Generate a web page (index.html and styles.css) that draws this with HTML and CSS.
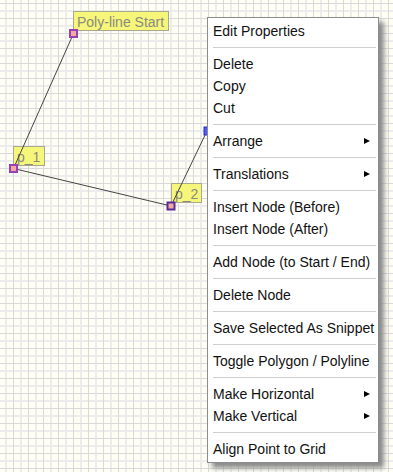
FILE: index.html
```html
<!DOCTYPE html>
<html lang="en">
<head>
    <meta charset="UTF-8">
    <meta name="viewport" content="width=device-width, initial-scale=1.0">
    <title>Poly-line Editor</title>
    <link rel="stylesheet" href="styles.css">
</head>
<body>
    <div class="canvas">
        <svg class="drawing" width="393" height="472" viewBox="0 0 393 472">
            <!-- labels -->
            <g class="label">
                <rect x="73.5" y="11.5" width="95" height="19"></rect>
                <text x="77" y="27">Poly-line Start</text>
            </g>
            <g class="label">
                <rect x="13.5" y="146.5" width="31" height="19"></rect>
                <text x="17" y="162">p_1</text>
            </g>
            <g class="label">
                <rect x="171.5" y="183.5" width="30" height="19"></rect>
                <text x="175" y="199">p_2</text>
            </g>

            <!-- segments -->
            <polyline class="segment" points="73.5,33.5 13.5,168.5 171,206 207,131"></polyline>

            <!-- nodes -->
            <rect class="node" x="70" y="30" width="7" height="7"></rect>
            <rect class="node" x="10" y="165" width="7" height="7"></rect>
            <rect class="node node-dark" x="167.5" y="202.5" width="7" height="7"></rect>
            <rect class="node node-blue" x="204" y="127" width="7" height="8"></rect>
        </svg>

        <ul class="context-menu">
            <li class="item">Edit Properties</li>
            <li class="sep"></li>
            <li class="item">Delete</li>
            <li class="item">Copy</li>
            <li class="item">Cut</li>
            <li class="sep"></li>
            <li class="item has-sub">Arrange</li>
            <li class="sep"></li>
            <li class="item has-sub">Translations</li>
            <li class="sep"></li>
            <li class="item">Insert Node (Before)</li>
            <li class="item">Insert Node (After)</li>
            <li class="sep"></li>
            <li class="item">Add Node (to Start / End)</li>
            <li class="sep"></li>
            <li class="item">Delete Node</li>
            <li class="sep"></li>
            <li class="item">Save Selected As Snippet</li>
            <li class="sep"></li>
            <li class="item">Toggle Polygon / Polyline</li>
            <li class="sep"></li>
            <li class="item has-sub">Make Horizontal</li>
            <li class="item has-sub">Make Vertical</li>
            <li class="sep"></li>
            <li class="item">Align Point to Grid</li>
        </ul>
    </div>
</body>
</html>
```

FILE: styles.css
```css
body {
    margin: 0;
    font-family: "Liberation Sans", Arial, sans-serif;
}
.canvas {
    position: relative;
    width: 393px;
    height: 472px;
    overflow: hidden;
    background-color: #fefef4;
    background-image:
        linear-gradient(to right, transparent 13px, #d9d9d9 13px, #d9d9d9 14px, transparent 14px),
        linear-gradient(to bottom, transparent 3px, #d9d9d9 3px, #d9d9d9 4px, transparent 4px),
        linear-gradient(to right, transparent 5px, #ececec 5px, #ececec 7px, transparent 7px),
        linear-gradient(to bottom, transparent 10px, #ececec 10px, #ececec 12px, transparent 12px);
    background-size: 15px 15px;
}
.drawing {
    display: block;
}
.label rect {
    fill: #f6f67a;
    stroke: #a8a890;
    stroke-width: 1;
}
.label text {
    font-family: "Liberation Sans", Arial, sans-serif;
    font-size: 14px;
    fill: #8a8a80;
}
.segment {
    fill: none;
    stroke: #444;
    stroke-width: 1;
}
.node {
    fill: #f2a9a0;
    stroke: #9b3fb5;
    stroke-width: 2;
}
.node-dark {
    stroke: #5a2a9a;
}
.node-blue {
    fill: #4a5cff;
    stroke: #2a2ad0;
    stroke-width: 1;
}
.context-menu {
    position: absolute;
    left: 207px;
    top: 17px;
    width: 170px;
    margin: 0;
    padding: 2px 0;
    list-style: none;
    background: #fff;
    border: 1px solid #8c8c8c;
    box-shadow: 5px 5px 5px #8a8a8a;
}
.item {
    display: flex;
    align-items: center;
    justify-content: space-between;
    height: 22px;
    padding: 0 8px 0 5px;
    font-size: 14px;
    line-height: 22px;
    color: #111;
    white-space: nowrap;
}
.has-sub::after {
    content: "";
    border-left: 6px solid #000;
    border-top: 3.5px solid transparent;
    border-bottom: 3.5px solid transparent;
}
.sep {
    height: 1px;
    margin: 5px 2px 5px 5px;
    background: #cfcfcf;
}
```
